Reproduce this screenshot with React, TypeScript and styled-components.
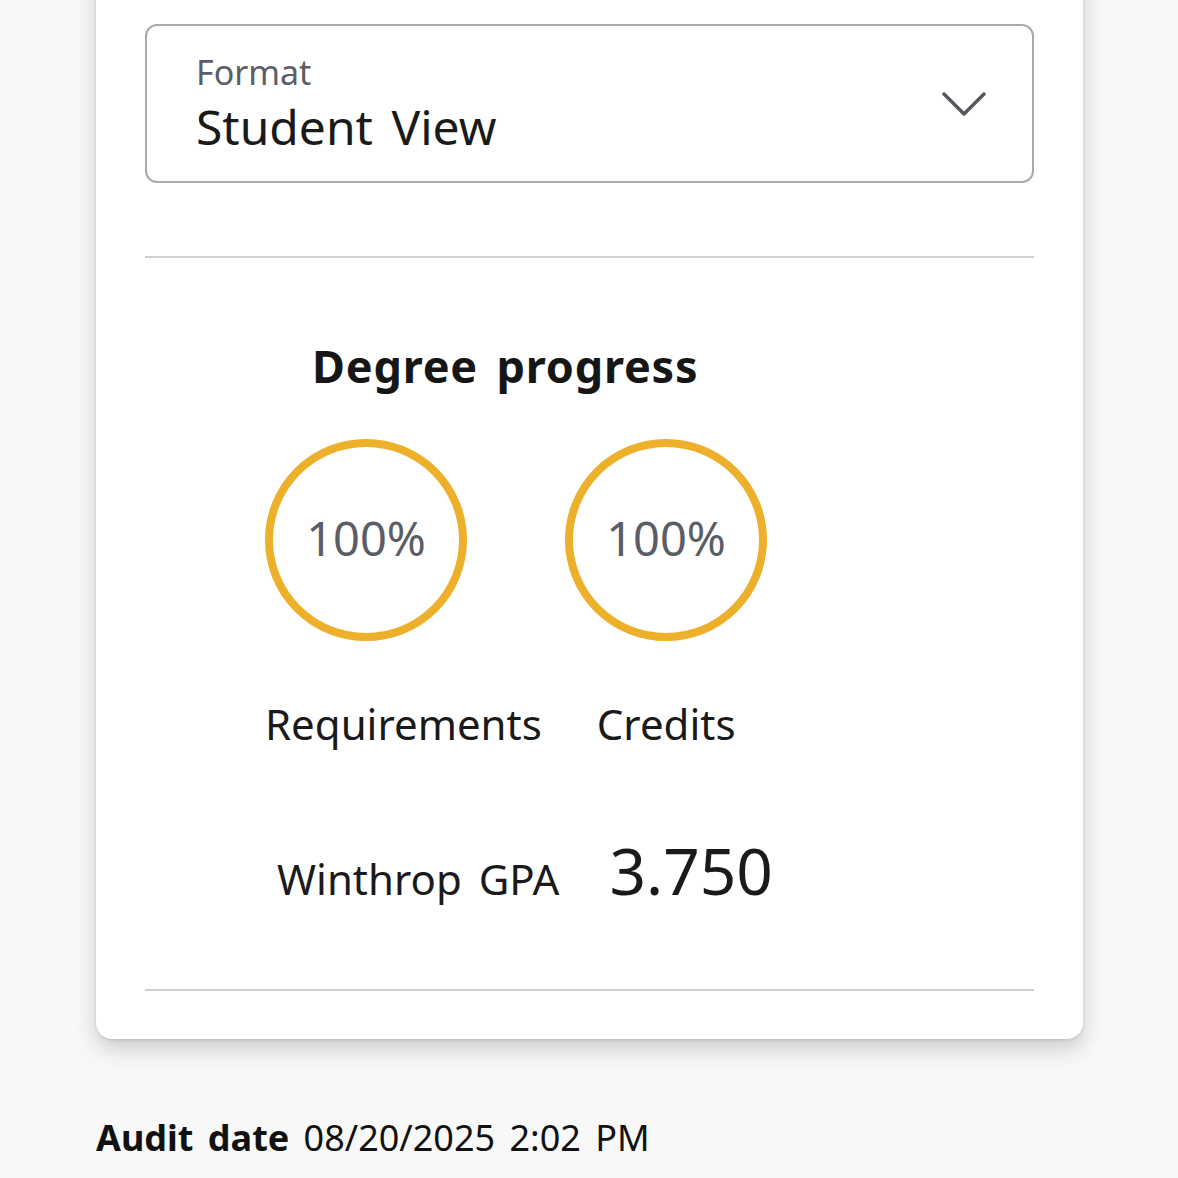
import React from "react";
import styled, { createGlobalStyle } from "styled-components";

const Global = createGlobalStyle`
  html, body { margin: 0; padding: 0; background: #f8f8f8; }
  body { font-family: "Noto Sans", "Open Sans", Arial, sans-serif; color: #1a1a1a; overflow: hidden; }
`;

const Page = styled.div`
  width: 1178px;
  height: 1178px;
  padding: 0 95px 0 96px;
  box-sizing: border-box;
  display: flex;
  flex-direction: column;
`;

const Card = styled.div`
  margin-top: -40px;
  background: #fff;
  border-radius: 16px;
  box-shadow: 0 10px 22px rgba(0, 0, 0, 0.18), 0 1px 3px rgba(0, 0, 0, 0.12);
  padding: 64px 49px 48px;
  display: flex;
  flex-direction: column;
`;

const Select = styled.div`
  height: 159px;
  box-sizing: border-box;
  border: 2px solid #a9a9b0;
  border-radius: 12px;
  padding: 0 46px 0 49px;
  display: flex;
  align-items: center;
  justify-content: space-between;
`;

const SelectText = styled.div`
  display: flex;
  flex-direction: column;
`;

const SelectLabel = styled.span`
  font-size: 34px;
  line-height: 44px;
  color: #5b5e66;
  margin-top: 2px;
`;

const SelectValue = styled.span`
  font-size: 48px;
  line-height: 66px;
  color: #1a1a1a;
  word-spacing: 6px;
`;

const Divider = styled.hr<{ $gap: number }>`
  border: none;
  height: 2px;
  background: #cfcfd2;
  margin: ${(p) => p.$gap}px 0 0;
`;

const Progress = styled.section`
  display: flex;
  flex-direction: column;
  padding-left: 120px;
`;

const Heading = styled.h2`
  margin: 78px 0 0 47px;
  font-size: 45px;
  font-weight: 700;
  line-height: 60px;
  letter-spacing: 0.8px;
  word-spacing: 6px;
  color: #161616;
`;

const Row = styled.div<{ $gap: number; $top: number; $indent?: number }>`
  display: flex;
  align-items: baseline;
  gap: ${(p) => p.$gap}px;
  margin-top: ${(p) => p.$top}px;
  padding-left: ${(p) => p.$indent ?? 0}px;
`;

const Ring = styled.div`
  width: 202px;
  height: 202px;
  box-sizing: border-box;
  border-radius: 50%;
  border: 8px solid #ecb02b;
  display: flex;
  align-items: center;
  justify-content: center;
  font-size: 47px;
  color: #5a5d66;
  padding-bottom: 4px;
`;

const StatLabel = styled.span`
  font-size: 42px;
  line-height: 52px;
  color: #1a1a1a;
`;

const GpaLabel = styled.span`
  font-size: 42px;
  color: #1a1a1a;
  word-spacing: 6px;
`;

const GpaValue = styled.span`
  font-size: 64px;
  color: #1a1a1a;
`;

const Audit = styled.div`
  margin-top: 74px;
  font-size: 36px;
  color: #111;
  word-spacing: 5px;
  b { font-weight: 700; }
`;

const Chevron = () => (
  <svg width="44" height="26" viewBox="0 0 44 26" fill="none">
    <path d="M2 3 L22 23 L42 3" stroke="#55575e" strokeWidth="3.5" strokeLinecap="round" strokeLinejoin="round" />
  </svg>
);

export default function App() {
  return (
    <>
      <Global />
      <Page>
        <Card>
          <Select>
            <SelectText>
              <SelectLabel>Format</SelectLabel>
              <SelectValue>Student View</SelectValue>
            </SelectText>
            <Chevron />
          </Select>
          <Divider $gap={73} />
          <Progress>
            <Heading>Degree progress</Heading>
            <Row $gap={98} $top={43}>
              <Ring>100%</Ring>
              <Ring>100%</Ring>
            </Row>
            <Row $gap={55} $top={57}>
              <StatLabel>Requirements</StatLabel>
              <StatLabel>Credits</StatLabel>
            </Row>
            <Row $gap={50} $top={77} $indent={12}>
              <GpaLabel>Winthrop GPA</GpaLabel>
              <GpaValue>3.750</GpaValue>
            </Row>
          </Progress>
          <Divider $gap={75} />
        </Card>
        <Audit>
          <b>Audit date</b> 08/20/2025 2:02 PM
        </Audit>
      </Page>
    </>
  );
}
